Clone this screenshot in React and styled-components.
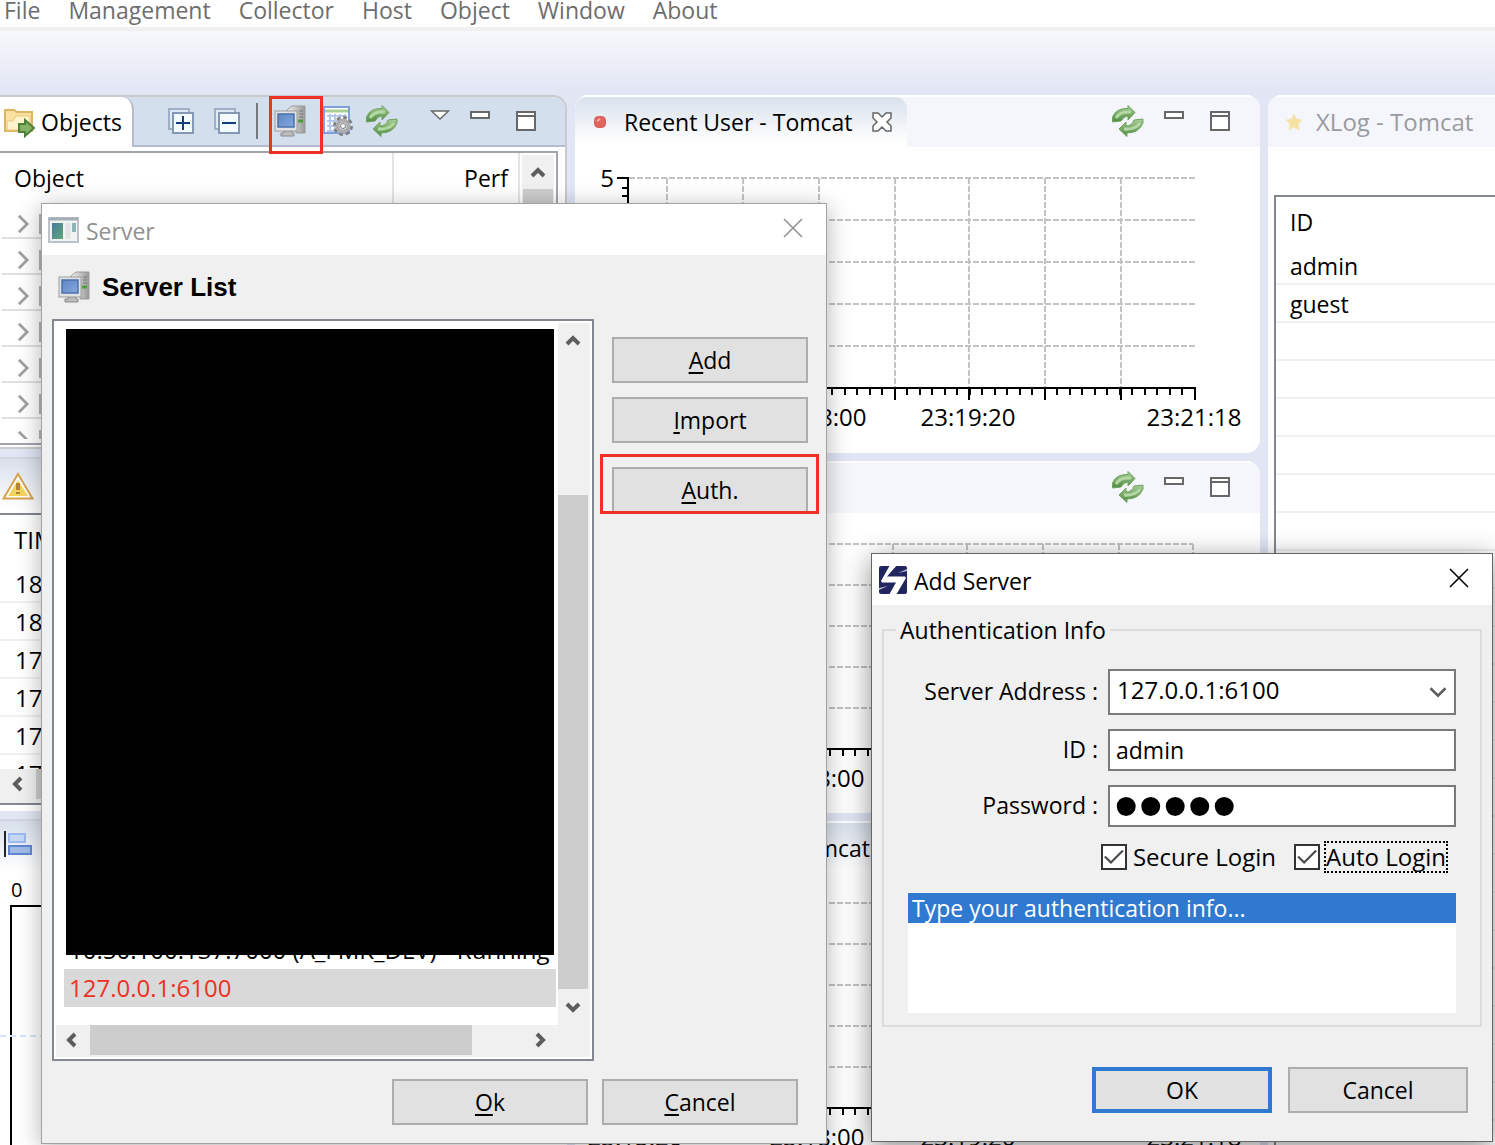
import React, { useState } from 'react';
import styled, { createGlobalStyle, css } from 'styled-components';

const MENU = ['File', 'Management', 'Collector', 'Host', 'Object', 'Window', 'About'];
const TREE_ROWS = [1, 2, 3, 4, 5, 6, 7];
const ALERTS = ['18:21:04', '18:20:41', '17:58:12', '17:57:30', '17:44:09', '17:43:55'];
const USERS = ['admin', 'guest', '', '', '', '', '', '', '', '', '', '', '', '', '', '', '', '', '', '', '', '', '', ''];

/* ---------- icons ---------- */

const RefreshIcon = () => (
  <svg width="32" height="32" viewBox="0 0 32 32">
    <defs>
      <linearGradient id="leaf" x1="0" y1="0" x2="0" y2="1">
        <stop offset="0" stopColor="#a9cf97" />
        <stop offset="1" stopColor="#4f8a41" />
      </linearGradient>
    </defs>
    <path d="M0.500 17V12Q4 3 16 3.500V0.500L23 7.500L16 15V11Q12 11 9 16Z" fill="url(#leaf)" stroke="#6fa35f" />
    <path d="M31 14V18Q27 28 15 28V31.500L7 24L14 17V21Q20 21 22 15Z" fill="url(#leaf)" stroke="#6fa35f" />
    <path d="M4 13Q8 6 19 7M28 18Q23 25 12 24" fill="none" stroke="#b4d8a3" strokeWidth="3" />
  </svg>
);

const MinimizeIcon = () => (
  <svg width="20" height="8" viewBox="0 0 20 8">
    <rect x="1" y="1" width="18" height="6" fill="#fff" stroke="#686868" strokeWidth="2" />
  </svg>
);

const MaximizeIcon = () => (
  <svg width="20" height="20" viewBox="0 0 20 20">
    <rect x="1" y="1" width="18" height="18" fill="#fff" stroke="#686868" strokeWidth="2" />
    <path d="M1 5H19" stroke="#686868" strokeWidth="2" />
  </svg>
);

const MenuArrowIcon = () => (
  <svg width="20" height="10" viewBox="0 0 20 10">
    <path d="M1.500 1H18.500L10 9Z" fill="#fff" stroke="#686868" strokeWidth="1.500" />
  </svg>
);

const TreeBoxIcon = ({ plus }) => (
  <svg width="26" height="27" viewBox="0 0 26 27">
    <rect x="1" y="1" width="20" height="20" fill="#dcebf5" stroke="#9fb0c6" strokeWidth="2" />
    <rect x="5" y="5" width="20" height="20" fill="#f3fbfe" stroke="#8497b3" strokeWidth="2" />
    <path d="M8 15H22" stroke="#123f79" strokeWidth="2" />
    {plus && <path d="M15 8V22" stroke="#123f79" strokeWidth="2" />}
  </svg>
);

const ComputerIcon = () => (
  <svg width="32" height="32" viewBox="0 0 32 32">
    <defs>
      <linearGradient id="tower" x1="0" x2="1">
        <stop offset="0" stopColor="#f3f3f3" />
        <stop offset="1" stopColor="#989898" />
      </linearGradient>
      <linearGradient id="glass" x1="0" y1="0" x2="1" y2="1">
        <stop offset="0" stopColor="#5d86c2" />
        <stop offset="1" stopColor="#86a9de" />
      </linearGradient>
    </defs>
    <path d="M13 5L18 1H31V28H22V8H13Z" fill="url(#tower)" stroke="#9a9a9a" />
    <path d="M25 6H29M25 9H29M25 12H29" stroke="#777" />
    <path d="M24 16H29" stroke="#45a335" strokeWidth="3" />
    <path d="M10 26H18V28H20V31H7V28H10Z" fill="#bdbdbd" stroke="#8b8b8b" />
    <rect x="1" y="6" width="22" height="20" fill="#e2e2e2" stroke="#9c9c9c" />
    <rect x="4" y="9" width="16" height="13" fill="url(#glass)" stroke="#4a70ad" strokeWidth="1.500" />
  </svg>
);

const TableGearIcon = () => (
  <svg width="32" height="32" viewBox="0 0 32 32">
    <rect x="1" y="2" width="25" height="26" fill="#fff" stroke="#7fa0d8" strokeWidth="2" />
    <path d="M2 6H25" stroke="#a8cf95" strokeWidth="3" />
    <path d="M4 11H24M4 16H24M4 21H24M4 26H18M7 9V27M12 9V27M17 9V27M22 9V20" stroke="#b4c8ec" strokeWidth="2" />
    <circle cx="20" cy="21" r="8" fill="none" stroke="#7e7e7e" strokeWidth="4" strokeDasharray="3.400 2.880" />
    <circle cx="20" cy="21" r="5.500" fill="#eee" stroke="#ababab" strokeWidth="4" />
    <circle cx="20" cy="21" r="2.500" fill="#fff" stroke="#777" />
  </svg>
);

const FolderIcon = () => (
  <svg width="32" height="32" viewBox="0 -2 32 32">
    <path d="M1 23V2H10L13 4H28V23Z" fill="#f7e1a0" stroke="#deb565" strokeWidth="2" />
    <path d="M3 13H9L12 8H26V22H3Z" fill="#fff3cd" stroke="#ebc979" />
    <path d="M15 16H21V12L30 20L21 28V24H15Z" fill="#86b265" stroke="#4c8237" strokeWidth="2" />
  </svg>
);

const WarningIcon = () => (
  <svg width="32" height="28" viewBox="0 0 32 28">
    <path d="M16 2L30.500 26.500H1.500Z" fill="#fff" stroke="#d6a351" strokeWidth="2" />
    <path d="M16 8L26 24H6Z" fill="#f3d660" />
    <path d="M16 11V18M16 20V22" stroke="#b4843a" strokeWidth="4" />
  </svg>
);

const BarsIcon = () => (
  <svg width="28" height="26" viewBox="0 0 28 26">
    <path d="M1 0V26" stroke="#222" strokeWidth="2" />
    <rect x="5" y="3" width="16" height="8" fill="#c7d8f7" stroke="#9bb9ee" strokeWidth="2" />
    <rect x="5" y="15" width="22" height="8" fill="#a0bce6" stroke="#5f87d0" strokeWidth="2" />
  </svg>
);

const StarIcon = () => (
  <svg width="18" height="18" viewBox="0 0 18 18">
    <path d="M9 1L11.500 6L17 7L13 11L14 17L9 14L4 17L5 11L1 7L6.500 6Z" fill="#f5e2a2" stroke="#f3e6bd" />
  </svg>
);

const RecordIcon = () => (
  <svg width="12" height="12" viewBox="0 0 12 12">
    <rect x="0.500" y="0.500" width="11" height="11" rx="4" fill="#e06660" stroke="#dc5450" />
    <path d="M3 5L6 3" stroke="#f7b1aa" strokeWidth="2" />
  </svg>
);

const CloseTabIcon = () => (
  <svg width="22" height="22" viewBox="0 0 22 22">
    <path
      d="M2 2H7L11 6L15 2H20V7L16 11L20 15V20H15L11 16L7 20H2V15L6 11L2 7Z"
      fill="#fff"
      stroke="#666"
      strokeWidth="1.500"
    />
  </svg>
);

const CloseIcon = () => (
  <svg width="20" height="20" viewBox="0 0 20 20">
    <path d="M1 1L19 19M19 1L1 19" stroke="currentColor" strokeWidth="1.600" />
  </svg>
);

const WindowIcon = () => (
  <svg width="32" height="28" viewBox="0 0 32 28">
    <defs>
      <linearGradient id="pane" x1="0" y1="0" x2="1" y2="1">
        <stop offset="0" stopColor="#4b7aa0" />
        <stop offset="1" stopColor="#5fa774" />
      </linearGradient>
    </defs>
    <rect x="1" y="2" width="29" height="24" fill="#f2f3f3" stroke="#bcc2c7" strokeWidth="2" />
    <path d="M1 3H30" stroke="#a5adb4" strokeWidth="3" />
    <rect x="4" y="7" width="11" height="16" fill="url(#pane)" />
    <path d="M20 7V23" stroke="#e1e3e4" strokeWidth="5" />
    <path d="M26 7V16" stroke="#8fb4b8" strokeWidth="4" />
  </svg>
);

const ScouterIcon = () => (
  <svg width="30" height="30" viewBox="0 0 30 30">
    <rect x="1" y="1" width="28" height="28" rx="2" fill="#22265f" />
    <path d="M12 0H19L9 11.500H27L28 13L18 30H11L18 17.500H4L3 16Z" fill="#fff" />
    <path d="M20 8L29 4V6ZM10 21L1 25V23Z" fill="#b9bbd3" />
  </svg>
);

const ARROWS = {
  up: 'M2 11L8 5L14 11',
  down: 'M2 5L8 11L14 5',
  left: 'M11 2L5 8L11 14',
  right: 'M5 2L11 8L5 14'
};

const Arrow = ({ dir, color = '#5d5d5d', weight = 4, size = 16 }) => (
  <svg width={size} height={size} viewBox="0 0 16 16">
    <path d={ARROWS[dir]} fill="none" stroke={color} strokeWidth={weight} />
  </svg>
);

/* ---------- chart ---------- */

const LineChart = ({ height, top, step, shift = 0, closed }) => {
  const majors = [92, 168, 244, 320, 394, 470, 546, 620].map(x => x - shift);
  const axisY = top + step * 5;
  const endX = majors[7];
  const minors = [];
  for (let x = 57; x < endX; x += 12.5) minors.push(Math.round(x) - shift);
  const rows = [0, 1, 2, 3, 4].map(i => top + i * step);

  return (
    <ChartSvg height={height}>
      {rows.map(y => (
        <path key={y} d={`M54 ${y}H${endX}`} stroke="#c3c3c3" strokeWidth="2" strokeDasharray="6 2" />
      ))}
      {majors.slice(0, closed ? 8 : 7).map(x => (
        <path key={x} d={`M${x} ${top}V${axisY}`} stroke="#c3c3c3" strokeWidth="2" strokeDasharray="6 2" />
      ))}
      <path
        d={`M42 ${top}H53V${axisY}H${endX}${majors.map(x => `M${x} ${axisY - 1}v13`).join('')}`}
        fill="none"
        stroke="#000"
        strokeWidth="2"
      />
      <path d={minors.map(x => `M${x} ${axisY}v7`).join('')} stroke="#000" strokeWidth="2" />
      <path d={`M47 ${top + 10}h6M47 ${top + 18}h6`} stroke="#000" strokeWidth="2" />
      <ChartText x="32" y={top + 9}>5</ChartText>
      <ChartText x={60} y={axisY + 38}>23:15:20</ChartText>
      <ChartText x={244 - shift} y={axisY + 38}>23:18:00</ChartText>
      <ChartText x={393} y={axisY + 38}>23:19:20</ChartText>
      <ChartText x={619} y={axisY + 38}>23:21:18</ChartText>
    </ChartSvg>
  );
};

/* ---------- windows ---------- */

const ViewTools = () => (
  <Tools>
    <IconButton aria-label="Refresh"><RefreshIcon /></IconButton>
    <IconButton aria-label="Minimize" $raised><MinimizeIcon /></IconButton>
    <IconButton aria-label="Maximize" $space={6}><MaximizeIcon /></IconButton>
  </Tools>
);

const ServerDialog = () => (
  <ServerWindow role="dialog" aria-label="Server">
    <TitleBar $dim>
      <WindowIcon />
      <Title>Server</Title>
      <CloseButton aria-label="Close"><CloseIcon /></CloseButton>
    </TitleBar>
    <Heading>
      <ComputerIcon />
      Server List
    </Heading>
    <ServerBody>
      <ListBox>
        <ListView>
          <ListRows>
            <ListRow>10.50.100.137:7000 (A_FMK_DEV) - Running</ListRow>
            <ListRow $selected>127.0.0.1:6100</ListRow>
          </ListRows>
          <Masked />
        </ListView>
        <VScroll>
          <Arrow dir="up" />
          <VThumb />
          <Arrow dir="down" />
        </VScroll>
        <HScroll>
          <Arrow dir="left" />
          <HThumb />
          <Arrow dir="right" />
        </HScroll>
      </ListBox>
      <SideButtons>
        <PushButton><u>A</u>dd</PushButton>
        <PushButton><u>I</u>mport</PushButton>
        <AuthSlot>
          <PushButton><u>A</u>uth.</PushButton>
          <AuthMark />
        </AuthSlot>
      </SideButtons>
    </ServerBody>
    <ServerFooter>
      <PushButton><u>O</u>k</PushButton>
      <PushButton><u>C</u>ancel</PushButton>
    </ServerFooter>
  </ServerWindow>
);

const AddServerDialog = () => {
  const [form, setForm] = useState({
    address: '127.0.0.1:6100',
    id: 'admin',
    password: 'admin',
    secure: true,
    auto: true
  });

  const handleChange = event => {
    const { name, type, value, checked } = event.target;
    setForm({ ...form, [name]: type === 'checkbox' ? checked : value });
  };

  return (
    <AddWindow role="dialog" aria-label="Add Server">
      <TitleBar>
        <ScouterIcon />
        <Title>Add Server</Title>
        <CloseButton aria-label="Close"><CloseIcon /></CloseButton>
      </TitleBar>
      <Group>
        <legend>Authentication Info</legend>
        <FormGrid>
          <label htmlFor="address">Server Address :</label>
          <SelectWrap>
            <Select id="address" name="address" value={form.address} onChange={handleChange}>
              <option>127.0.0.1:6100</option>
            </Select>
            <SelectArrow><Arrow dir="down" weight={2} size={20} /></SelectArrow>
          </SelectWrap>
          <label htmlFor="id">ID :</label>
          <TextInput id="id" name="id" value={form.id} onChange={handleChange} />
          <label htmlFor="password">Password :</label>
          <PasswordInput id="password" name="password" type="password" value={form.password} onChange={handleChange} />
        </FormGrid>
        <Checks>
          <CheckLabel>
            <CheckBox name="secure" checked={form.secure} onChange={handleChange} />
            <span>Secure Login</span>
          </CheckLabel>
          <CheckLabel $focused>
            <CheckBox name="auto" checked={form.auto} onChange={handleChange} />
            <span>Auto Login</span>
          </CheckLabel>
        </Checks>
        <MessageList>
          <li>Type your authentication info...</li>
        </MessageList>
      </Group>
      <AddFooter>
        <PushButton $primary>OK</PushButton>
        <PushButton>Cancel</PushButton>
      </AddFooter>
    </AddWindow>
  );
};

export default function App() {
  return (
    <Desktop>
      <GlobalStyle />
      <MenuBar>
        {MENU.map(item => (
          <MenuItem key={item}>{item}</MenuItem>
        ))}
      </MenuBar>
      <Coolbar />
      <Workbench>
        <Column>
          <ObjectPanel>
            <ObjectHeader>
              <ObjectTab>
                <FolderIcon />
                Objects
              </ObjectTab>
              <ObjectTools>
                <IconButton aria-label="Expand all"><TreeBoxIcon plus /></IconButton>
                <IconButton aria-label="Collapse all"><TreeBoxIcon /></IconButton>
                <Divider />
                <ServerSlot>
                  <IconButton aria-label="Servers"><ComputerIcon /></IconButton>
                  <IconButton aria-label="Settings"><TableGearIcon /></IconButton>
                  <ServerMark />
                </ServerSlot>
                <IconButton aria-label="Refresh"><RefreshIcon /></IconButton>
                <IconButton aria-label="View menu" $raised $space={12}><MenuArrowIcon /></IconButton>
                <IconButton aria-label="Minimize" $raised><MinimizeIcon /></IconButton>
                <IconButton aria-label="Maximize" $space={6}><MaximizeIcon /></IconButton>
              </ObjectTools>
            </ObjectHeader>
            <TreeFrame>
              <TreeBody>
                <TreeHead>
                  <span>Object</span>
                  <span>Perf</span>
                </TreeHead>
                {TREE_ROWS.map(n => (
                  <TreeRow key={n}>
                    <Arrow dir="right" color="#a0a0a0" weight={2} size={22} />
                    <NodeIcon />
                  </TreeRow>
                ))}
              </TreeBody>
              <TreeScroll>
                <Arrow dir="up" />
                <TreeThumb />
              </TreeScroll>
            </TreeFrame>
          </ObjectPanel>
          <AlertPanel>
            <FadeTab><WarningIcon /></FadeTab>
            <AlertView>
              <table>
                <thead>
                  <tr><th>TIME</th></tr>
                </thead>
                <tbody>
                  {ALERTS.map(time => (
                    <tr key={time}><td>{time}</td></tr>
                  ))}
                </tbody>
              </table>
            </AlertView>
            <AlertScroll>
              <Arrow dir="left" />
              <HThumb />
            </AlertScroll>
          </AlertPanel>
          <EqPanel>
            <FadeTab $padded><BarsIcon /></FadeTab>
            <EqScale>0</EqScale>
            <EqBox>
              <EqGuide />
            </EqBox>
          </EqPanel>
        </Column>

        <Column>
          <ChartPanel $height={358}>
            <ViewHeader>
              <ActiveTab>
                <RecordIcon />
                <span>Recent User - Tomcat</span>
                <CloseTabIcon />
              </ActiveTab>
              <ViewTools />
            </ViewHeader>
            <LineChart height={306} top={31} step={42} />
          </ChartPanel>
          <ChartPanel $height={352}>
            <ViewHeader>
              <span />
              <ViewTools />
            </ViewHeader>
            <LineChart height={300} top={31} step={41} shift={2} closed />
          </ChartPanel>
          <ChartPanel $height={400}>
            <ViewHeader>
              <ActiveTab>
                <RecordIcon />
                <span>Service Count - Tomcat</span>
              </ActiveTab>
              <ViewTools />
            </ViewHeader>
            <LineChart height={300} top={30} step={41} shift={2} closed />
          </ChartPanel>
        </Column>

        <Column>
          <LogPanel>
            <ViewHeader>
              <IdleTab>
                <StarIcon />
                XLog - Tomcat
              </IdleTab>
            </ViewHeader>
            <UserTable>
              <thead>
                <tr><th>ID</th></tr>
              </thead>
              <tbody>
                {USERS.map((user, i) => (
                  <tr key={i}><td>{user}</td></tr>
                ))}
              </tbody>
            </UserTable>
          </LogPanel>
        </Column>
      </Workbench>
      <ServerDialog />
      <AddServerDialog />
    </Desktop>
  );
}

/* ---------- styles ---------- */

const GlobalStyle = createGlobalStyle`
  * {
    box-sizing: border-box;
  }

  body {
    margin: 0;
    overflow: hidden;
  }

  body, button, input, select {
    font-family: "Open Sans", "Noto Sans CJK KR", sans-serif;
    font-size: 23px;
    line-height: 30px;
    color: #000;
  }

  svg {
    display: block;
    flex: none;
  }

  table {
    border-collapse: separate;
    border-spacing: 0;
  }
`;

const Desktop = styled.div`
  position: relative;
  display: flex;
  flex-direction: column;
  height: 100vh;
  overflow: hidden;
  background: #e1e5f4;
`;

const MenuBar = styled.nav`
  display: flex;
  flex: none;
  align-items: center;
  gap: 28px;
  height: 31px;
  padding: 0 4px 8px;
  background: #fff;
  border-bottom: 4px solid #f0f0f0;
`;

const MenuItem = styled.button`
  padding: 0;
  border: 0;
  background: none;
  line-height: 22px;
  color: #6d6d6d;
`;

const Coolbar = styled.div`
  flex: none;
  height: 64px;
  background: linear-gradient(#f6f8fc, #e1e5f4);
`;

const Workbench = styled.main`
  display: grid;
  flex: 1;
  grid-template-columns: 567px minmax(0, 1fr) 227px;
  gap: 8px;
  min-height: 0;
`;

const Column = styled.div`
  display: flex;
  flex-direction: column;
  gap: 8px;
  min-width: 0;
`;

const IconButton = styled.button`
  display: flex;
  margin: 0 0 0 ${props => props.$space || 0}px;
  padding: 0 0 ${props => (props.$raised ? '12px' : '0')};
  border: 0;
  background: none;
`;

/* left column */

const ObjectPanel = styled.section`
  flex: none;
  height: 354px;
  padding-right: 7px;
  background: #fff;
  border: 2px solid #c9cacd;
  border-left: 0;
  border-radius: 0 14px 0 0;
`;

const ObjectHeader = styled.header`
  display: flex;
  height: 50px;
  margin-right: -7px;
  background: #d3dfec;
  border-radius: 0 12px 0 0;
`;

const ObjectTab = styled.div`
  display: flex;
  align-items: center;
  gap: 5px;
  width: 134px;
  padding-left: 4px;
  background: #fff;
  border-right: 2px solid #b4bccd;
  border-radius: 0 12px 0 0;
`;

const ObjectTools = styled.div`
  display: flex;
  flex: 1;
  align-items: center;
  justify-content: flex-end;
  gap: 20px;
  padding: 0 29px 0 0;
  border-bottom: 2px solid #b4bccd;
`;

const Divider = styled.span`
  width: 2px;
  height: 36px;
  margin: 0 -4px;
  background: #75797f;
`;

const ServerSlot = styled.div`
  position: relative;
  display: flex;
  gap: 17px;
  margin-right: -9px;
`;

const mark = css`
  position: absolute;
  border: 3px solid #ee3124;
  pointer-events: none;
`;

const ServerMark = styled.span`
  ${mark}
  top: -9px;
  left: -5px;
  width: 54px;
  height: 58px;
`;

const TreeFrame = styled.div`
  display: flex;
  height: 294px;
  margin-top: 4px;
  border: 2px solid #a3a5ad;
  border-left: 0;
`;

const TreeBody = styled.div`
  flex: 1;
  margin-bottom: 4px;
  overflow: hidden;
`;

const TreeHead = styled.div`
  display: flex;
  height: 50px;
  line-height: 50px;

  span {
    flex: 1;
    padding-left: 14px;
    border-right: 2px solid #e4e4e4;
  }

  span + span {
    flex: none;
    width: 126px;
    padding: 0 10px 0 0;
    text-align: right;
  }
`;

const TreeRow = styled.div`
  display: flex;
  align-items: center;
  gap: 5px;
  height: 36px;
  margin-left: 2px;
  padding: 8px 0 0 10px;
  border-bottom: 2px solid #e0e0e0;
`;

const NodeIcon = styled.span`
  width: 20px;
  height: 20px;
  border: 2px solid #b5b5b5;
`;

const scroll = css`
  display: flex;
  align-items: center;
  background: #f0f0f0;
`;

const TreeScroll = styled.div`
  ${scroll}
  flex-direction: column;
  width: 32px;
  margin: 2px;
  padding-top: 10px;
`;

const TreeThumb = styled.span`
  width: 30px;
  height: 90px;
  margin-top: 8px;
  background: #cdcdcd;
`;

const FadeTab = styled.header`
  display: flex;
  align-items: center;
  height: 56px;
  padding: ${props => (props.$padded ? '0 0 8px 4px' : '0 0 0 2px')};
  background: linear-gradient(#d9e0ec, #fff 92%);
  border-top: 2px solid #d3d6de;
`;

const AlertPanel = styled.section`
  flex: none;
  height: 354px;
  padding-bottom: 6px;
  background: #fff;
`;

const AlertView = styled.div`
  height: 256px;
  border-top: 2px solid #828790;
  overflow: hidden;

  table {
    width: 100%;
  }

  th, td {
    height: 38px;
    padding: 2px 0 0 15px;
    border-bottom: 2px solid #f0f0f0;
    font-size: 24px;
    font-weight: 400;
    text-align: left;
  }

  th {
    height: 50px;
    padding: 0 0 0 14px;
    border: 0;
  }
`;

const AlertScroll = styled.div`
  ${scroll}
  gap: 10px;
  height: 36px;
  padding: 0 0 4px 10px;
  border-bottom: 2px solid #828790;
`;

const EqPanel = styled.section`
  display: flex;
  flex: 1;
  flex-direction: column;
  background: #fff;
`;

const EqScale = styled.div`
  padding-left: 11px;
  font-size: 20px;
`;

const EqBox = styled.div`
  flex: 1;
  margin-left: 10px;
  border: solid #000;
  border-width: 2px 0 0 2px;
`;

const EqGuide = styled.div`
  margin: 128px 0 0 -12px;
  border-top: 2px dashed #d6e0ff;
`;

/* centre and right columns */

const ChartPanel = styled.section`
  flex: none;
  height: ${props => props.$height}px;
  background: #fff;
  border-radius: 14px;
  overflow: hidden;
`;

const ViewHeader = styled.header`
  display: flex;
  justify-content: space-between;
  height: 52px;
  background: #f4f6fc;
  border-top: 2px solid #fff;
`;

const ActiveTab = styled.div`
  display: flex;
  align-items: center;
  gap: 18px;
  padding: 0 14px 0 19px;
  background: linear-gradient(#d9e1ec, #fff 92%);
  border-radius: 12px 12px 0 0;
`;

const IdleTab = styled.div`
  display: flex;
  align-items: center;
  gap: 13px;
  padding-left: 17px;
  font-size: 24px;
  color: #9a9ba0;
  white-space: nowrap;
`;

const Tools = styled.div`
  display: flex;
  align-items: center;
  gap: 20px;
  padding: 0 30px 2px 0;
`;

const ChartSvg = styled.svg`
  width: 100%;
`;

const ChartText = styled.text`
  font-size: 24px;
  text-anchor: middle;
`;

const LogPanel = styled.section`
  flex: 1;
  background: #fff;
  border-radius: 14px 0 0 0;
  overflow: hidden;
`;

const UserTable = styled.table`
  width: calc(100% - 6px);
  margin: 48px 0 0 6px;
  border: solid #828790;
  border-width: 2px 0 0 2px;

  th, td {
    height: 38px;
    padding: 2px 0 0 14px;
    border-bottom: 2px solid #f0f0f0;
    font-weight: 400;
    text-align: left;
  }

  th {
    height: 50px;
    padding-top: 0;
    border: 0;
  }
`;

/* dialogs */

const Window = styled.div`
  position: absolute;
  display: flex;
  flex-direction: column;
  background: #f0f0f0;
`;

const ServerWindow = styled(Window)`
  top: 203px;
  left: 41px;
  width: 786px;
  height: 941px;
  border: 1px solid #a2a2a2;
  box-shadow: 0 4px 22px rgba(0, 0, 0, 0.3);
`;

const AddWindow = styled(Window)`
  top: 553px;
  left: 871px;
  width: 622px;
  height: 589px;
  border: 1px solid #666;
  box-shadow: 0 6px 26px rgba(0, 0, 0, 0.45);
`;

const TitleBar = styled.header`
  display: flex;
  flex: none;
  align-items: center;
  gap: 6px;
  height: 51px;
  padding: 0 23px 0 6px;
  background: #fff;
  color: ${props => (props.$dim ? '#929292' : '#000')};
`;

const Title = styled.span`
  flex: 1;
  padding-top: 2px;
`;

const CloseButton = styled.button`
  padding: 0 0 4px;
  border: 0;
  background: none;
  color: inherit;
`;

const Heading = styled.h1`
  display: flex;
  flex: none;
  align-items: center;
  gap: 12px;
  height: 64px;
  margin: 0;
  padding-left: 16px;
  font-family: "Liberation Sans", sans-serif;
  font-size: 26px;
`;

const ServerBody = styled.div`
  display: flex;
  flex: 1;
  gap: 18px;
  padding: 0 18px 0 10px;
`;

const ListBox = styled.div`
  display: grid;
  flex: 1;
  grid-template-columns: minmax(0, 1fr) 32px;
  grid-template-rows: minmax(0, 1fr) 32px;
  padding: 2px;
  background: #fff;
  border: 2px solid #828790;
`;

const ListView = styled.div`
  position: relative;
  display: flex;
  flex-direction: column;
  justify-content: flex-end;
  padding: 0 2px 18px 8px;
  overflow: hidden;
`;

const ListRows = styled.ul`
  margin: 0;
  padding: 0;
  list-style: none;
`;

const ListRow = styled.li`
  height: 38px;
  padding-left: 5px;
  font-size: 24px;
  line-height: 38px;
  white-space: nowrap;
  overflow: hidden;
  background: ${props => (props.$selected ? '#d9d9d9' : '#fff')};
  color: ${props => (props.$selected ? '#ee3124' : '#000')};
`;

const Masked = styled.div`
  position: absolute;
  inset: 6px 4px 70px 10px;
  background: #000;
`;

const VScroll = styled.div`
  ${scroll}
  flex-direction: column;
  justify-content: space-between;
  padding: 10px 2px 10px 0;
`;

const VThumb = styled.span`
  width: 30px;
  height: 494px;
  margin: auto 0 10px;
  background: #cdcdcd;
`;

const HScroll = styled.div`
  ${scroll}
  grid-column: 1 / -1;
  gap: 10px;
  padding: 0 42px 2px 8px;

  svg:last-child {
    margin-left: auto;
  }
`;

const HThumb = styled.span`
  width: 382px;
  height: 30px;
  background: #cdcdcd;
`;

const SideButtons = styled.div`
  display: flex;
  flex-direction: column;
  gap: 14px;
  padding-top: 18px;
`;

const PushButton = styled.button`
  width: 196px;
  height: 46px;
  padding: 0;
  background: #e1e1e1;
  border: 2px solid #adadad;

  ${props => props.$primary && css`
    border: 4px solid #2f79d0;
  `}

  u {
    text-decoration-thickness: 2px;
    text-underline-offset: 3px;
    text-decoration-skip-ink: none;
  }
`;

const AuthSlot = styled.div`
  position: relative;
  margin-top: 10px;
`;

const AuthMark = styled.span`
  ${mark}
  inset: -13px -11px -1px -12px;
`;

const ServerFooter = styled.footer`
  display: flex;
  justify-content: flex-end;
  gap: 14px;
  padding: 18px 28px;
`;

const Group = styled.fieldset`
  flex: 1;
  margin: 10px 10px 0;
  padding: 24px 24px 12px;
  border: 2px solid #dcdcdc;

  legend {
    margin-left: -12px;
    padding: 0 4px;
  }
`;

const FormGrid = styled.div`
  display: grid;
  grid-template-columns: minmax(0, 1fr) 348px;
  gap: 14px 10px;
  align-items: center;

  label {
    padding-bottom: 2px;
    text-align: right;
  }
`;

const field = css`
  width: 100%;
  height: 42px;
  padding: 0 6px;
  background: #fff;
  border: 2px solid #7a7a7a;
  border-radius: 0;
  outline: 0;
`;

const TextInput = styled.input`
  ${field}
`;

const PasswordInput = styled.input`
  ${field}
  padding: 0 4px;
  font-family: "Liberation Sans", sans-serif;
  font-size: 70px;
  line-height: 38px;
`;

const SelectWrap = styled.div`
  position: relative;
`;

const Select = styled.select`
  ${field}
  display: block;
  height: 46px;
  padding: 0 40px 4px 7px;
  font-size: 24px;
  appearance: none;
`;

const SelectArrow = styled.span`
  position: absolute;
  top: 13px;
  right: 8px;
  pointer-events: none;
`;

const Checks = styled.div`
  display: flex;
  justify-content: flex-end;
  gap: 16px;
  padding: 14px 8px 20px 0;
`;

const CheckLabel = styled.label`
  display: flex;
  align-items: center;
  gap: 4px;
  font-size: 24px;

  span {
    border: 2px dotted ${props => (props.$focused ? '#000' : 'transparent')};
    line-height: 28px;
  }
`;

const CheckBox = styled.input.attrs({ type: 'checkbox' })`
  width: 26px;
  height: 26px;
  margin: 0;
  appearance: none;
  background: #fff;
  border: 2px solid #333;

  &:checked::before {
    content: '';
    display: block;
    height: 22px;
    background: #4a4a4a;
    clip-path: polygon(1px 11px, 3px 10px, 8px 15px, 19px 4px, 21px 5px, 8px 18px);
  }
`;

const MessageList = styled.ul`
  height: 120px;
  margin: 0;
  padding: 0;
  background: #fff;
  list-style: none;

  li {
    padding-left: 4px;
    background: #2f79d0;
    color: #fff;
  }
`;

const AddFooter = styled.footer`
  display: flex;
  justify-content: flex-end;
  gap: 16px;
  padding: 40px 24px 28px;

  button {
    width: 180px;
  }
`;
